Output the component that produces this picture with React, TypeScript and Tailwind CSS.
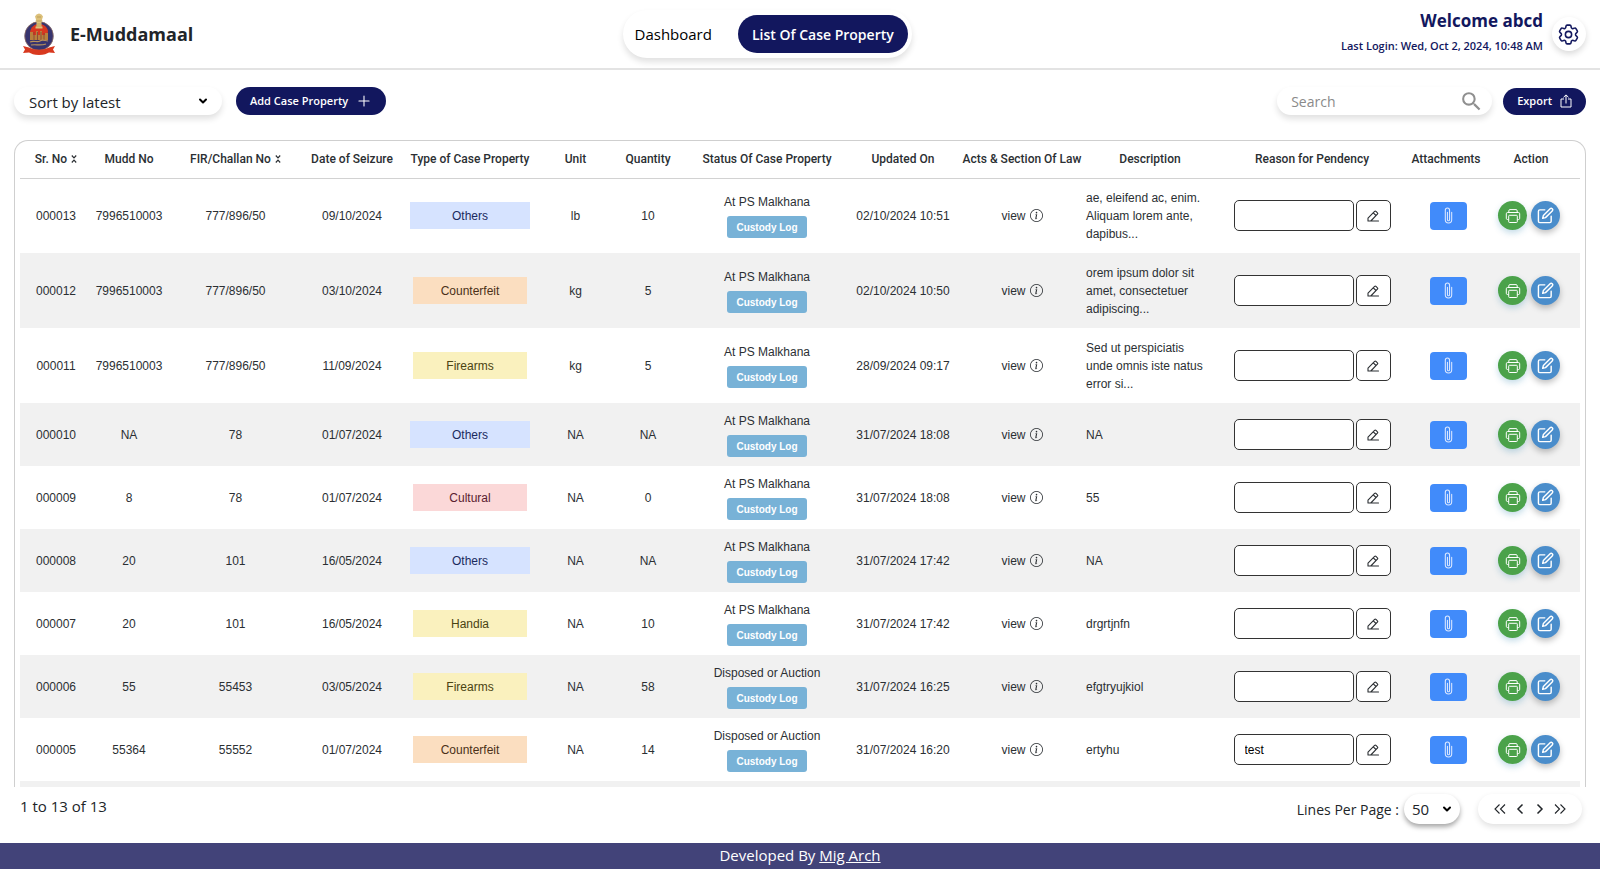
import { BsInfoCircle, BsPaperclip } from "react-icons/bs";
import { MdSearch } from "react-icons/md";
import { FiEdit } from "react-icons/fi";
import { HiOutlineCog6Tooth } from "react-icons/hi2";
import { RxPlus } from "react-icons/rx";
import { LuChevronDown } from "react-icons/lu";

type Kind = "Others" | "Counterfeit" | "Firearms" | "Cultural" | "Handia";

interface CaseRow {
  sr: string;
  mudd: string;
  fir: string;
  seized: string;
  kind: Kind;
  unit: string;
  qty: string;
  status: string;
  updated: string;
  description: string;
  reason?: string;
}

const kindStyles: Record<Kind, string> = {
  Others: "bg-[#d6e3ff] text-[#1a2a5e]",
  Counterfeit: "mx-[3px] bg-[#fbdec0] text-[#4a3018]",
  Firearms: "mx-[3px] bg-[#faf1be] text-[#4a4312]",
  Cultural: "mx-[3px] bg-[#fbd8d8] text-[#5a2030]",
  Handia: "mx-[3px] bg-[#faf1be] text-[#4a4312]",
};

const rows: CaseRow[] = [
  { sr: "000013", mudd: "7996510003", fir: "777/896/50", seized: "09/10/2024", kind: "Others", unit: "lb", qty: "10", status: "At PS Malkhana", updated: "02/10/2024 10:51", description: "ae, eleifend ac, enim. Aliquam lorem ante, dapibus..." },
  { sr: "000012", mudd: "7996510003", fir: "777/896/50", seized: "03/10/2024", kind: "Counterfeit", unit: "kg", qty: "5", status: "At PS Malkhana", updated: "02/10/2024 10:50", description: "orem ipsum dolor sit amet, consectetuer adipiscing..." },
  { sr: "000011", mudd: "7996510003", fir: "777/896/50", seized: "11/09/2024", kind: "Firearms", unit: "kg", qty: "5", status: "At PS Malkhana", updated: "28/09/2024 09:17", description: "Sed ut perspiciatis unde omnis iste natus error si..." },
  { sr: "000010", mudd: "NA", fir: "78", seized: "01/07/2024", kind: "Others", unit: "NA", qty: "NA", status: "At PS Malkhana", updated: "31/07/2024 18:08", description: "NA" },
  { sr: "000009", mudd: "8", fir: "78", seized: "01/07/2024", kind: "Cultural", unit: "NA", qty: "0", status: "At PS Malkhana", updated: "31/07/2024 18:08", description: "55" },
  { sr: "000008", mudd: "20", fir: "101", seized: "16/05/2024", kind: "Others", unit: "NA", qty: "NA", status: "At PS Malkhana", updated: "31/07/2024 17:42", description: "NA" },
  { sr: "000007", mudd: "20", fir: "101", seized: "16/05/2024", kind: "Handia", unit: "NA", qty: "10", status: "At PS Malkhana", updated: "31/07/2024 17:42", description: "drgrtjnfn" },
  { sr: "000006", mudd: "55", fir: "55453", seized: "03/05/2024", kind: "Firearms", unit: "NA", qty: "58", status: "Disposed or Auction", updated: "31/07/2024 16:25", description: "efgtryujkiol" },
  { sr: "000005", mudd: "55364", fir: "55552", seized: "01/07/2024", kind: "Counterfeit", unit: "NA", qty: "14", status: "Disposed or Auction", updated: "31/07/2024 16:20", description: "ertyhu", reason: "test" },
];

const columns: { label: string; width: string; sortable?: boolean }[] = [
  { label: "Sr. No", width: "w-[72px]", sortable: true },
  { label: "Mudd No", width: "w-[74px]" },
  { label: "FIR/Challan No", width: "w-[139px]", sortable: true },
  { label: "Date of Seizure", width: "w-[94px]" },
  { label: "Type of Case Property", width: "w-[142px]" },
  { label: "Unit", width: "w-[69px]" },
  { label: "Quantity", width: "w-[76px]" },
  { label: "Status Of Case Property", width: "w-[162px]" },
  { label: "Updated On", width: "w-[110px]" },
  { label: "Acts & Section Of Law", width: "w-[128px]" },
  { label: "Description", width: "w-[128px]" },
  { label: "Reason for Pendency", width: "w-[196px]" },
  { label: "Attachments", width: "w-[72px]" },
  { label: "Action", width: "w-[98px]" },
];

function Emblem() {
  return (
    <svg viewBox="0 0 34 42" className="h-[42px] w-[34px]" aria-hidden="true">
      <circle cx="17" cy="23" r="14.5" fill="#37346f" />
      <circle cx="17" cy="23" r="14.3" fill="none" stroke="#a8805e" strokeWidth="0.6" />
      <path d="M17 11c5 0 8 3 9 7l-2 14H10L8 19c1-5 4-8 9-8z" fill="#d9371f" />
      <path d="M8 19h3v3h3v-4h2v4h2v-4h2v4h3v-2h3v7H8z" fill="#b8803c" />
      <path d="M12 19v8M15.500 19v8M19 19v8M22 20v7" stroke="#843f38" strokeWidth="0.8" />
      <path d="M5 27h24c-1 5-6 9-12 9s-11-4-12-9z" fill="#37346f" />
      <path d="M8 29c4-2 7 1 10-1s5 0 8 0M9 32c5-1 9 1 15-1" stroke="#b8925c" strokeWidth="1.2" fill="none" />
      <path d="M1 33l6 1.500c6 3 14 3 20 0l6-1.500-2 3.500 2 3.500-6-.5c-2 1-5 2.500-10 2.500s-8-1.500-10-2.500L1 40l2-3.500z" fill="#d8391f" />
      <path d="M14.500 1.500l2.500-1 2.500 1 1.500 2-1 3 .5 2h-1v5h1v2h-7v-2h1v-5h-1l.5-2-1-3z" fill="#dcc07a" />
      <path d="M15 4h4M14.500 8h5M16 10v4M18 10v4" stroke="#a98a45" strokeWidth="0.6" />
    </svg>
  );
}

function SortIcon() {
  return (
    <svg viewBox="0 0 6 8" className="h-2 w-[6px]" fill="none" stroke="currentColor" strokeWidth="1.2" aria-hidden="true">
      <path d="M0.800 0.500L3 2.800L5.200 0.500M0.800 7.500L3 5.200L5.200 7.500" />
    </svg>
  );
}

function PencilIcon() {
  return (
    <svg viewBox="0 0 12 12" className="h-3 w-3" fill="none" stroke="currentColor" strokeWidth="1.100" strokeLinejoin="round" strokeLinecap="round" aria-hidden="true">
      <path d="M1 11V8.200L7.600 1.400a1 1 0 0 1 1.400 0l1.400 1.400a1 1 0 0 1 0 1.400L3.800 11zM6.300 2.800l2.700 2.700M3.800 11H11.500" />
    </svg>
  );
}

function PrintIcon() {
  return (
    <svg viewBox="0 0 16 16" className="h-4 w-4" fill="none" stroke="currentColor" strokeWidth="1" strokeLinejoin="round" aria-hidden="true">
      <path d="M3.500 11.500H2.500a1.200 1.200 0 0 1-1.200-1.200V5.800A1.300 1.300 0 0 1 2.600 4.500h10.800a1.300 1.300 0 0 1 1.300 1.300v4.500a1.200 1.200 0 0 1-1.200 1.200h-1" />
      <path d="M3.800 4.500V2.800A1.200 1.200 0 0 1 5 1.600h6a1.200 1.200 0 0 1 1.200 1.200v1.700" />
      <rect x="3.700" y="7.300" width="8.600" height="7.200" rx="0.800" />
    </svg>
  );
}

function ExportIcon() {
  return (
    <svg viewBox="0 0 12 14" className="h-[14px] w-3" fill="none" stroke="currentColor" strokeWidth="1" aria-hidden="true">
      <path d="M4 5H1v8h10V5H8M6 9.500V1M3.500 3.300L6 0.900l2.500 2.400" />
    </svg>
  );
}

function Chevrons({ double = false, right = false }: { double?: boolean; right?: boolean }) {
  return (
    <svg viewBox="0 0 12 12" className={right ? "size-3 rotate-180" : "size-3"} fill="none" stroke="currentColor" strokeWidth={double ? 1.1 : 1.5} aria-hidden="true">
      <path d={double ? "M5.500 1.500L1 6l4.500 4.500M11 1.500L6.500 6l4.500 4.500" : "M8.500 1.500L4 6l4.500 4.500"} />
    </svg>
  );
}

function Row({ row }: { row: CaseRow }) {
  const tall = row.description.length > 30;
  return (
    <tr className={`${tall ? "h-[75px]" : "h-[63px]"} even:bg-[#f1f1f1]`}>
      <td>{row.sr}</td>
      <td>{row.mudd}</td>
      <td>{row.fir}</td>
      <td>{row.seized}</td>
      <td className="px-[11px]">
        <div className={`flex h-[27px] items-center justify-center ${kindStyles[row.kind]}`}>{row.kind}</div>
      </td>
      <td>{row.unit}</td>
      <td>{row.qty}</td>
      <td>
        <div className="flex flex-col items-center gap-[5px]">
          <span className="leading-[18px]">{row.status}</span>
          <button className="h-[22px] w-20 rounded-[3px] bg-[#78b2d7] text-[10px] font-bold text-white">Custody Log</button>
        </div>
      </td>
      <td>{row.updated}</td>
      <td>
        <button className="inline-flex items-center gap-1">
          view <BsInfoCircle size={13} />
        </button>
      </td>
      <td className="text-left leading-[18px]">{row.description}</td>
      <td>
        <div className="flex justify-center gap-[2px]">
          <input aria-label={`Reason for pendency ${row.sr}`} defaultValue={row.reason ?? ""} className="h-[31px] w-[120px] rounded-[5px] border border-[#333] bg-white px-[10px] text-[12px] text-black" />
          <button aria-label={`Edit reason ${row.sr}`} className="flex h-[31px] w-[35px] items-center justify-center rounded-[5px] border border-[#333] bg-white">
            <PencilIcon />
          </button>
        </div>
      </td>
      <td className="pl-1">
        <button aria-label={`Attachments ${row.sr}`} className="inline-flex h-7 w-[37px] items-center justify-center rounded-[4px] bg-[#418bfa] align-middle text-[#dbe8ff]">
          <BsPaperclip size={17} />
        </button>
      </td>
      <td>
        <div className="flex justify-center gap-1 pr-1 text-white">
          <button aria-label={`Print ${row.sr}`} className="flex size-[29px] items-center justify-center rounded-full bg-[#4ba24a] shadow-[0_3px_6px_rgba(60,140,180,0.3)]">
            <PrintIcon />
          </button>
          <button aria-label={`Edit ${row.sr}`} className="flex size-[29px] items-center justify-center rounded-full bg-[#4a8dcb] shadow-[0_3px_6px_rgba(0,0,0,0.25)]">
            <FiEdit size={17} />
          </button>
        </div>
      </td>
    </tr>
  );
}

export default function App() {
  return (
    <div className="flex h-screen flex-col bg-white font-['Open_Sans',sans-serif] text-[#212529]">
      <header className="flex h-[70px] shrink-0 items-center justify-between border-b-2 border-[#e3e3e3] pr-[14px] pl-[22px]">
        <div className="flex items-center gap-[14px]">
          <Emblem />
          <h1 className="text-[18px] font-bold">E-Muddamaal</h1>
        </div>
        <nav className="flex h-12 items-center rounded-full bg-white pr-1 pl-3 shadow-[0_4px_6px_rgba(0,0,0,0.12)]">
          <a href="#dashboard" className="mr-[26px] text-[15px] font-medium text-black">Dashboard</a>
          <a href="#list" className="flex h-[38px] items-center rounded-full bg-[#12175e] px-[14px] text-[14px] font-semibold text-white">List Of Case Property</a>
        </nav>
        <div className="flex items-center gap-[9px]">
          <div className="text-right text-[#12175e]">
            <div className="text-[17px] leading-6 font-bold">Welcome abcd</div>
            <div className="text-[11px] leading-[26px] font-semibold">Last Login: Wed, Oct 2, 2024, 10:48 AM</div>
          </div>
          <button aria-label="Settings" className="flex size-[34px] items-center justify-center rounded-full bg-white text-[#12175e] shadow-[0_3px_6px_rgba(0,0,0,0.15)]">
            <HiOutlineCog6Tooth size={25} />
          </button>
        </div>
      </header>

      <main className="flex min-h-0 flex-1 flex-col px-[14px]">
        <div className="flex h-[70px] shrink-0 items-center justify-between pb-2">
          <div className="flex items-center gap-[14px]">
            <div className="relative flex items-center">
              <select aria-label="Sort" className="h-7 w-[208px] appearance-none rounded-full bg-white px-[15px] pt-[2px] text-[15px] shadow-[0_4px_6px_rgba(0,0,0,0.12)]">
                <option>Sort by latest</option>
              </select>
              <LuChevronDown size={12} strokeWidth={4} className="pointer-events-none absolute right-[13px] text-black" />
            </div>
            <button className="flex h-7 items-center gap-2 rounded-full bg-[#12175e] px-[14px] text-[11px] font-semibold text-white">
              Add Case Property <RxPlus size={16} />
            </button>
          </div>
          <div className="flex items-center gap-[11px]">
            <div className="flex h-7 w-[215px] items-center justify-between rounded-full bg-white pr-2 pl-[14px] shadow-[0_4px_6px_rgba(0,0,0,0.12)]">
              <input type="search" aria-label="Search" placeholder="Search" className="w-36 bg-transparent text-[14px] outline-none placeholder:text-[#8a8a8a]" />
              <MdSearch size={25} className="text-[#8f8f8f]" />
            </div>
            <button className="flex h-[27px] items-center gap-2 rounded-full bg-[#12175e] px-[14px] text-[11px] font-semibold text-white">
              Export <ExportIcon />
            </button>
          </div>
        </div>

        <div className="min-h-0 flex-1 overflow-hidden rounded-t-[14px] border border-b-0 border-[#cfcfcf] px-[5px]">
          <table className="w-full table-fixed text-center font-['Liberation_Sans',Arial,sans-serif] text-[12px] text-[#2b2f33]">
            <thead>
              <tr className="h-[37px] border-b border-[#d2d2d2] font-['Roboto',sans-serif]">
                {columns.map((column) => (
                  <th key={column.label} scope="col" className={`${column.width} font-medium whitespace-nowrap`}>
                    {column.sortable ? (
                      <button className="inline-flex items-center gap-1">
                        {column.label} <SortIcon />
                      </button>
                    ) : (
                      column.label
                    )}
                  </th>
                ))}
              </tr>
            </thead>
            <tbody>
              {rows.map((row) => (
                <Row key={row.sr} row={row} />
              ))}
              <tr className="h-[63px] even:bg-[#f1f1f1]">
                <td colSpan={14} />
              </tr>
            </tbody>
          </table>
        </div>

        <div className="flex h-14 shrink-0 items-start justify-between pt-[7px] pr-1 pl-[6px]">
          <p className="text-[15px] leading-6">1 to 13 of 13</p>
          <div className="flex items-center">
            <label htmlFor="lines" className="mr-[5px] text-[14px]">Lines Per Page :</label>
            <div className="relative mr-[18px] flex items-center">
              <select id="lines" className="h-[30px] w-14 appearance-none rounded-full bg-white px-2 text-[15px] shadow-[0_3px_5px_rgba(0,0,0,0.35)]">
                <option>50</option>
              </select>
              <LuChevronDown size={12} strokeWidth={4} className="pointer-events-none absolute right-[7px] text-black" />
            </div>
            <div className="flex h-[30px] items-center gap-2 rounded-full bg-white px-4 shadow-[0_3px_6px_rgba(0,0,0,0.12)]">
              <button aria-label="First page"><Chevrons double /></button>
              <button aria-label="Previous page"><Chevrons /></button>
              <button aria-label="Next page"><Chevrons right /></button>
              <button aria-label="Last page"><Chevrons double right /></button>
            </div>
          </div>
        </div>
      </main>

      <footer className="flex h-[26px] shrink-0 items-center justify-center bg-[#424379] pb-[2px] text-[15px] text-white">
        <span>
          Developed By <a href="#mig-arch" className="underline">Mig Arch</a>
        </span>
      </footer>
    </div>
  );
}
